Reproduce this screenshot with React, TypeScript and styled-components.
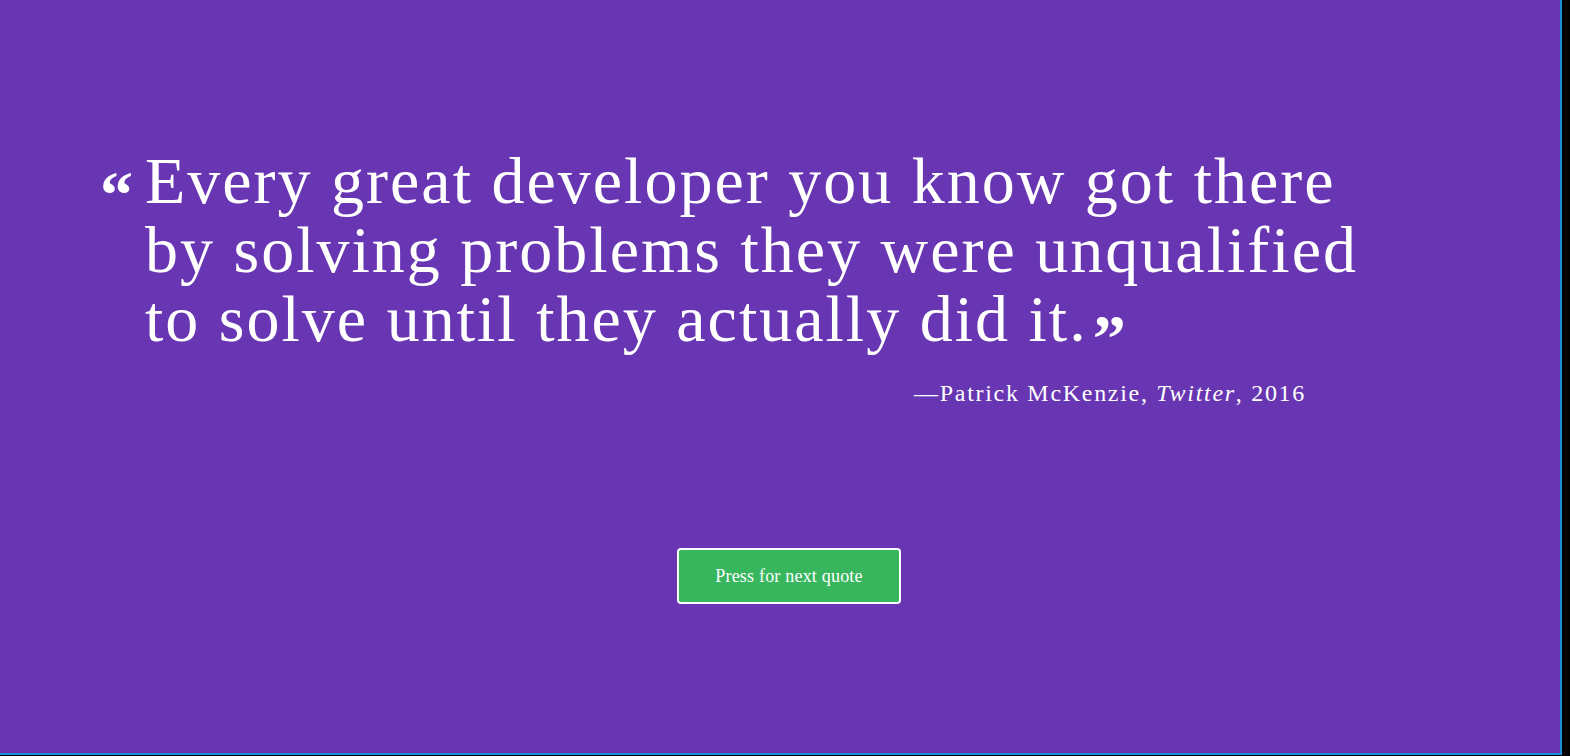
import React from "react";
import styled, { createGlobalStyle } from "styled-components";

const Global = createGlobalStyle`
  html, body { margin: 0; padding: 0; background: #000; }
  body { font-family: "Liberation Serif", "DejaVu Serif", serif; }
`;

const Page = styled.div`
  box-sizing: border-box;
  width: 1562px;
  height: 755px;
  background: #6836b2;
  border-right: 2px solid #1e90d8;
  border-bottom: 2px solid #1e90d8;
  color: #fff;
  display: flex;
  flex-direction: column;
  padding: 146px 0 0 100px;
`;

const QuoteRow = styled.div`
  display: flex;
  align-items: flex-start;
`;

const Mark = styled.span`
  font-family: "Liberation Serif", serif;
  font-weight: 700;
  font-size: 66px;
  line-height: 1;
  width: 45px;
  flex: none;
  padding-top: 16px;
`;

const CloseMark = styled.span`
  font-weight: 700;
  font-size: 66px;
  line-height: 0;
  margin-left: 5px;
  position: relative;
  top: 19px;
`;

const QuoteText = styled.blockquote`
  margin: 0;
  font-size: 66px;
  line-height: 69px;
  letter-spacing: 2px;
  white-space: nowrap;
`;

const Attribution = styled.div`
  width: 1206px;
  text-align: right;
  font-size: 24px;
  letter-spacing: 1.7px;
  margin-top: 27px;
  em { font-style: italic; }
`;

const ButtonRow = styled.div`
  display: flex;
  justify-content: center;
  width: 1378px;
  margin-top: 141px;
`;

const NextButton = styled.button`
  box-sizing: border-box;
  width: 224px;
  height: 56px;
  background: #37b65e;
  color: #fff;
  border: 2px solid #fff;
  border-radius: 4px;
  font-family: "Liberation Serif", serif;
  font-size: 18px;
  letter-spacing: 0.2px;
  cursor: pointer;
`;

export default function App() {
  return (
    <>
      <Global />
      <Page>
        <QuoteRow>
          <Mark>“</Mark>
          <QuoteText>
            Every great developer you know got there
            <br />
            by solving problems they were unqualified
            <br />
            to solve until they actually did it.
            <CloseMark>”</CloseMark>
          </QuoteText>
        </QuoteRow>
        <Attribution>
          —Patrick McKenzie, <em>Twitter</em>, 2016
        </Attribution>
        <ButtonRow>
          <NextButton>Press for next quote</NextButton>
        </ButtonRow>
      </Page>
    </>
  );
}
